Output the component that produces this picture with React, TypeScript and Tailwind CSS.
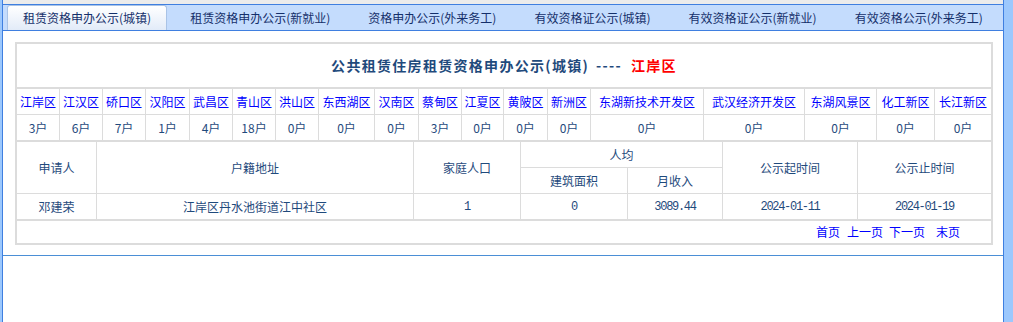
const districts = [
  { name: '江岸区', count: '3户' },
  { name: '江汉区', count: '6户' },
  { name: '硚口区', count: '7户' },
  { name: '汉阳区', count: '1户' },
  { name: '武昌区', count: '4户' },
  { name: '青山区', count: '18户' },
  { name: '洪山区', count: '0户' },
  { name: '东西湖区', count: '0户' },
  { name: '汉南区', count: '0户' },
  { name: '蔡甸区', count: '3户' },
  { name: '江夏区', count: '0户' },
  { name: '黄陂区', count: '0户' },
  { name: '新洲区', count: '0户' },
  { name: '东湖新技术开发区', count: '0户' },
  { name: '武汉经济开发区', count: '0户' },
  { name: '东湖风景区', count: '0户' },
  { name: '化工新区', count: '0户' },
  { name: '长江新区', count: '0户' },
];

const tabs = [
  '租赁资格申办公示(城镇)',
  '租赁资格申办公示(新就业)',
  '资格申办公示(外来务工)',
  '有效资格证公示(城镇)',
  '有效资格证公示(新就业)',
  '有效资格公示(外来务工)',
];

const cell = 'flex items-center justify-center';
const line = 'border-l border-[#dcdcdc]';
const mono = "font-['Liberation_Mono',monospace] tracking-[-1.3px]";

export default function App() {
  return (
    <div className="w-[1013px] h-[322px] overflow-hidden flex bg-white font-['Noto_Sans_CJK_SC','Noto_Sans',sans-serif] text-[12px]">
      {/* left frame strip */}
      <div className="w-[3px] bg-[#9cc8fd] border-r border-[#3f7fe0]" />

      <div className="w-[1000px] flex flex-col">
        <div className="h-[4px] bg-[#ececec]" />

        {/* tab bar */}
        <div className="h-[27px] bg-[#c4dcfd] border-t border-b border-[#3f7fe0] flex items-end pl-[4px]">
          {tabs.map((t, i) =>
            i === 0 ? (
              <div
                key={t}
                className="h-[25px] px-[15px] flex items-center rounded-t-[3px] border border-b-0 border-[#a9c3e6] bg-gradient-to-b from-white to-[#e2ebf8] text-[#142f6a]"
              >
                {t}
              </div>
            ) : (
              <div key={t} className="h-[25px] px-[15px] ml-[8px] flex items-center text-[#142f6a]">
                {t}
              </div>
            )
          )}
        </div>

        {/* content panel */}
        <div className="pt-[11px] pb-[10px] pl-[12px] border-b border-[#4b8fd6]">
          <div className="w-[978px] border-2 border-[#dcdcdc] bg-white">
            <div className="h-[43px] flex items-center justify-center font-bold text-[14px] tracking-[1.3px] text-[#1f4a7c]">
              <span>公共租赁住房租赁资格申办公示(城镇)</span>
              <span className="ml-[7px]">----</span>
              <span className="ml-[9px] text-[#ff0000]">江岸区</span>
            </div>

            {/* districts */}
            <div className="border-t-2 border-[#dcdcdc] grid grid-cols-[42px_43px_43px_44px_43px_43px_43px_56px_44px_43px_42px_44px_43px_113px_101px_72px_58px_57px] grid-rows-[25px_26px]">
              {districts.map((d, i) => (
                <div key={d.name} className={`${cell} text-[#0000ff] ${i === 0 ? '' : line}`}>
                  {d.name}
                </div>
              ))}
              {districts.map((d, i) => (
                <div
                  key={d.name + 'c'}
                  className={`${cell} text-[#1f4a7c] border-t border-[#dcdcdc] ${i === 0 ? '' : line}`}
                >
                  {d.count}
                </div>
              ))}
            </div>

            {/* records */}
            <div className="border-t-2 border-[#dcdcdc] grid grid-cols-[79px_317px_107px_107px_95px_135px_134px] grid-rows-[25px_26px_26px] text-[#1f4a7c]">
              <div className={`${cell} row-span-2`}>申请人</div>
              <div className={`${cell} row-span-2 ${line}`}>户籍地址</div>
              <div className={`${cell} row-span-2 ${line}`}>家庭人口</div>
              <div className={`${cell} col-span-2 ${line}`}>人均</div>
              <div className={`${cell} row-span-2 ${line}`}>公示起时间</div>
              <div className={`${cell} row-span-2 ${line}`}>公示止时间</div>
              <div className={`${cell} border-t ${line}`}>建筑面积</div>
              <div className={`${cell} border-t ${line}`}>月收入</div>

              <div className={`${cell} border-t border-[#dcdcdc]`}>邓建荣</div>
              <div className={`${cell} border-t ${line}`}>江岸区丹水池街道江中社区</div>
              <div className={`${cell} border-t ${line} ${mono}`}>1</div>
              <div className={`${cell} border-t ${line} ${mono}`}>0</div>
              <div className={`${cell} border-t ${line} ${mono}`}>3089.44</div>
              <div className={`${cell} border-t ${line} ${mono}`}>2024-01-11</div>
              <div className={`${cell} border-t ${line} ${mono}`}>2024-01-19</div>
            </div>

            {/* pager */}
            <div className="h-[24px] border-t-2 border-[#dcdcdc] flex items-center justify-end pr-[31px] text-[#0000ff]">
              <span>首页</span>
              <span className="ml-[7px]">上一页</span>
              <span className="ml-[6px]">下一页</span>
              <span className="ml-[11px]">末页</span>
            </div>
          </div>
        </div>

        <div className="flex-1 bg-white" />
      </div>

      {/* right frame strip */}
      <div className="w-[10px] bg-[#9cc8fd] border-l border-[#3f7fe0]" />
    </div>
  );
}
